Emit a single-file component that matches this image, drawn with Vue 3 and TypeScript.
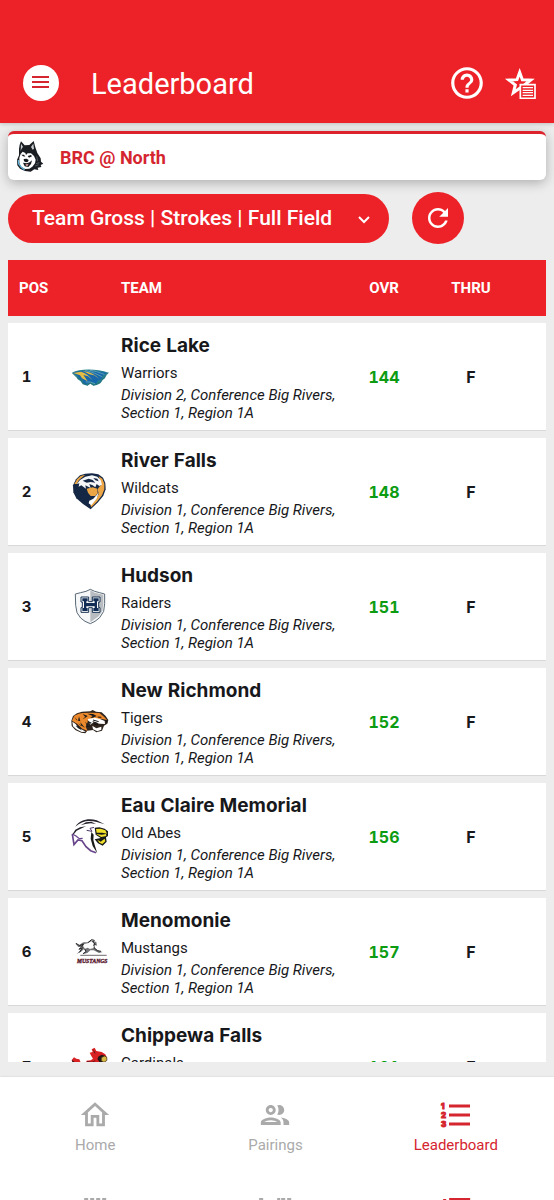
<script setup lang="ts">
import { ref } from 'vue'

interface Shape {
  d: string
  fill?: string
  stroke?: string
  w?: number
}
interface Lettering {
  text: string
  x: number
  y: number
  size: number
  family: string
  color: string
  edge: string
  slant?: string
}
interface Team {
  pos: number
  name: string
  mascot: string
  division: number
  score: number
  thru: string
  box: string
  art: Shape[]
  lettering?: Lettering
}

const filter = ref('Team Gross | Strokes | Full Field')

const huskyArt: Shape[] = [
  { d: 'M32 45 34 32 38 22 49 34 63 33 76 21 81 40 87 57 97 73 98 83 105 89 97 93 99 99 88 101 90 108 78 106 67 113 50 111 35 104 27 94 26 78 32 64Z', fill: '#1a1e22' },
  { d: 'M38 29 44 38 39 46 37 52ZM72 33 75 29 77 44 73 47 68 39Z', fill: '#c9cdd0' },
  { d: 'M37 60 43 53 51 57 53 63 58 58 68 58 77 66 82 77 80 88 72 98 63 104 50 105 38 98 33 86 33 71Z', fill: '#fff' },
  { d: 'M39 62 47 62 51 68 44 67ZM58 66 68 63 71 67 62 71ZM46 75 55 74 61 78 59 83 53 85 47 82ZM44 86 55 88 64 85 71 79 68 90 60 99 49 97Z', fill: '#15191c' },
  { d: 'M51 91 61 89 58 96 53 96Z', fill: '#c08b8b' },
  { d: 'M30 78 31 89 39 100 49 107', stroke: '#64b2d8', w: 4 },
  { d: 'M85 67 88 81M80 96 91 92M83 89 93 86', stroke: '#69737a', w: 2 },
]

const teams: Team[] = [
  {
    pos: 1, name: 'Rice Lake', mascot: 'Warriors', division: 2, score: 144, thru: 'F', box: '210 115 120 120',
    art: [
      { d: 'M216 162C238 149 289 149 326 162L319 168 315 179 307 185 302 193 291 199 280 201 271 195 262 201 248 197 242 188 233 182 229 174Z', fill: '#287f91' },
      { d: 'M220 163C243 153 286 155 320 163L309 170 304 180 293 186 288 196 272 190 257 197 250 193 248 184 237 178 232 170Z', fill: '#1767ac' },
      { d: 'M220 163 243 159C260 164 269 174 278 185L264 173 250 169 263 188 246 179 240 170ZM248 157C270 159 288 170 298 180L282 170 266 166 257 161Z', fill: '#e3bc44' },
      { d: 'M256 156C276 158 292 168 306 174M270 155 290 159 313 167M257 190 271 190 285 195', stroke: '#78b6b9', w: 2 },
      { d: 'M217 163 230 176 241 181 249 194 263 199 271 193 281 199 300 192 307 183 316 173 325 162', stroke: '#236b6d', w: 2 },
    ],
  },
  {
    pos: 2, name: 'River Falls', mascot: 'Wildcats', division: 1, score: 148, thru: 'F', box: '30 36 120 120',
    art: [
      { d: 'M39 76 48 58 60 46 76 41 96 40 115 43 129 53 136 69 137 88 130 107 114 127 92 148 69 132 49 115 40 97Z', fill: '#142744' },
      { d: 'M43 72 51 58 62 48 76 44 67 52 57 60 50 72ZM116 49 127 56 133 71 133 88 126 106 112 124 94 142 91 134 108 118 116 102 113 88 118 80 124 74Z', fill: '#eda645' },
      { d: 'M80 86 98 82 112 86 113 100 106 108 92 108 84 98Z', fill: '#eda645' },
      { d: 'M50 72 60 60 76 50 96 46 112 50 122 60 126 74 118 78 110 72 106 82 98 76 88 72 92 84 76 76 78 86 64 76 56 80 58 70Z', fill: '#f5f7f9' },
      { d: 'M68 62 86 56 98 60 106 68 92 66 80 68ZM100 54 112 56 116 64 106 61Z', fill: '#142744' },
      { d: 'M88 122 100 116 116 98 110 116 94 136 86 130Z', fill: '#fff' },
    ],
  },
  {
    pos: 3, name: 'Hudson', mascot: 'Raiders', division: 1, score: 151, thru: 'F', box: '30 21 120 120',
    art: [
      { d: 'M46 42 62 38 78 34 91 28 104 34 119 38 134 42 134 71 131 94 119 113 105 124 91 131 75 124 62 114 51 98 47 76Z', fill: '#f6f7f8', stroke: '#596976', w: 3 },
      { d: 'M91 31 104 38 130 44 130 72 127 93 116 109 91 127Z', fill: '#b9bdc1' },
      { d: 'M63 51H86V65H97V51H120V66H116V83H120V97H97V83H86V97H63V83H67V66H63Z', fill: '#fff', stroke: '#173253', w: 3 },
      { d: 'M67 55H83V64H79V69H104V64H100V55H116V64H111V84H116V93H100V84H104V79H79V84H83V93H67V84H72V64H67Z', fill: '#112d55' },
    ],
  },
  {
    pos: 4, name: 'New Richmond', mascot: 'Tigers', division: 1, score: 152, thru: 'F', box: '30 365 120 120',
    art: [
      { d: 'M34 421 39 407 51 399 66 394 91 393 98 389 108 394 125 396 137 407 145 419 142 430 132 436 126 451 109 456 99 449 82 451 76 459 64 457 46 449 35 437Z', fill: '#30251e' },
      { d: 'M36 421 43 406 56 400 68 398 93 397 118 398 132 409 141 419 123 415 108 418 96 415 83 424 77 439 83 452 67 445 51 430Z', fill: '#eb892c' },
      { d: 'M37 424 47 431 55 444 67 448 77 454 65 455 49 447 39 438ZM83 416 104 412 120 416 134 422 135 431 118 430 102 425 91 433ZM97 436 109 444 124 439 124 448 112 453 99 447Z', fill: '#fff' },
      { d: 'M43 409 49 419 61 423 57 408 54 422ZM68 415 76 410 68 401 83 407 74 414ZM91 413 98 407 82 400 99 401 110 407 98 412ZM80 420 96 428 90 430ZM75 423 85 436 96 436 82 440ZM53 428 64 438 61 426 75 443ZM47 438 54 438 66 451Z', fill: '#171b1d' },
      { d: 'M99 419 116 424M98 424 113 429M101 431 114 434M137 419 141 427M113 410 124 411', stroke: '#111', w: 3 },
    ],
  },
  {
    pos: 5, name: 'Eau Claire Memorial', mascot: 'Old Abes', division: 1, score: 156, thru: 'F', box: '30 33 120 120',
    art: [
      { d: 'M46 62C60 41 86 36 110 43L134 55 110 48C86 41 64 45 46 62ZM38 84 46 71 60 64 78 61 62 68 50 74 42 84ZM62 58 78 49 94 47 108 54 92 52 76 54Z', fill: '#27242d' },
      { d: 'M37 84 42 116 54 102 66 104 78 122 92 134 108 140', stroke: '#67458b', w: 5 },
      { d: 'M37 84 48 90 58 98 68 97', stroke: '#67458b', w: 4 },
      { d: 'M94 78 92 98 98 120 112 142 105 120 100 102 101 86Z', fill: '#171919' },
      { d: 'M104 65 118 64 134 68 144 76 144 90 138 94 140 107 128 119 114 112 104 100 122 96 107 86Z', fill: '#171919' },
      { d: 'M108 69 122 68 136 73 141 83 127 80 110 80ZM108 84 125 86 138 84 139 90 124 93ZM112 101 122 107 134 98 136 106 127 114 118 110Z', fill: '#f0e02b' },
      { d: 'M80 73 96 76 90 67 102 64', stroke: '#4e3a68', w: 3 },
    ],
  },
  {
    pos: 6, name: 'Menomonie', mascot: 'Mustangs', division: 1, score: 157, thru: 'F', box: '30 378 120 120',
    art: [
      { d: 'M45 412 57 417 70 409 82 409 92 402 100 405 109 408 111 419 104 417 105 427 117 435 128 438 117 441 101 433 91 433 82 441 67 445 77 437 73 428 63 437 50 444 61 433 66 423 55 423Z', fill: '#737477' },
      { d: 'M73 414 83 412 94 406 103 411 101 426 90 429 83 425 75 428 69 420Z', fill: '#fbfbfb' },
      { d: 'M48 412 59 419 70 414 65 422 57 430 67 425 59 439M85 410 94 401 103 403 98 408 106 415 99 418M74 429 78 437 69 443M101 424 112 434 123 436', stroke: '#242326', w: 3 },
      { d: 'M62 446 140 446 140 450 60 450Z', fill: '#8d868b' },
    ],
    lettering: { text: 'MUSTANGS', x: 51, y: 470, size: 17, family: 'Liberation Serif', color: '#57172d', edge: '#57172d', slant: 'italic' },
  },
  {
    pos: 7, name: 'Chippewa Falls', mascot: 'Cardinals', division: 1, score: 161, thru: 'F', box: '210 138 120 120',
    art: [
      { d: 'M215 177 222 169 229 173 238 175 242 184 256 188 260 179 272 178 279 173 274 165 269 155 278 153 275 145 284 140 289 150 305 153 316 160 320 169 317 181 308 191 298 215 276 234 251 224 238 202 220 192Z', fill: '#d92124' },
      { d: 'M215 177 224 183 240 184 236 194 222 192ZM296 166 306 161 318 166 312 172 309 184 299 184 292 174ZM279 143 286 157 294 160 283 156Z', fill: '#251515' },
      { d: 'M304 170 313 165 320 168 321 178 312 184 304 179Z', fill: '#d7b843', stroke: '#3b321e', w: 2 },
      { d: 'M261 181 276 184 286 179M251 203 275 207 292 197', stroke: '#751315', w: 3 },
    ],
  },
]
</script>

<template>
  <div class="app">
    <header class="bar">
      <button class="menu" aria-label="Menu">
        <svg width="36" height="36" viewBox="0 0 36 36"><path d="M9 12H26M9 17H26M9 22H26" fill="none" stroke="currentColor" stroke-width="2" /></svg>
      </button>
      <h1>Leaderboard</h1>
      <button class="action" aria-label="Help">
        <svg width="38" height="38" viewBox="0 0 24 24"><path fill="currentColor" d="M11 18h2v-2h-2v2zm1-16C6.48 2 2 6.48 2 12s4.48 10 10 10 10-4.48 10-10S17.52 2 12 2zm0 18c-4.41 0-8-3.59-8-8s3.59-8 8-8 8 3.59 8 8-3.59 8-8 8zm0-14c-2.210 0-4 1.790-4 4h2c0-1.100.900-2 2-2s2 .900 2 2c0 2-3 1.750-3 5h2c0-2.250 3-2.500 3-5 0-2.210-1.790-4-4-4z" /></svg>
      </button>
      <button class="action" aria-label="Favorites">
        <svg width="32" height="32" viewBox="0 0 96 96">
          <path d="M47 16 55 38 80 39 61 54 67 77 47 64 28 77 34 54 15 39 39 38Z" fill="none" stroke="currentColor" stroke-width="9" />
          <path d="M49 53H93V94H49Z" fill="#ed2228" stroke="currentColor" stroke-width="5" />
          <path d="M56 62H87M56 70H87M56 77H87M56 85H87" stroke="currentColor" stroke-width="4" />
        </svg>
      </button>
    </header>

    <main class="content">
      <section class="event">
        <svg class="husky" width="30" height="34" viewBox="23 18 90 102" aria-hidden="true">
          <path v-for="(s, i) in huskyArt" :key="i" :d="s.d" :fill="s.fill ?? 'none'" :stroke="s.stroke ?? 'none'" :stroke-width="s.w" />
        </svg>
        <h2>BRC @ North</h2>
      </section>

      <div class="filters">
        <div class="picker">
          <select v-model="filter" aria-label="Leaderboard view">
            <option>Team Gross | Strokes | Full Field</option>
          </select>
          <svg class="chevron" width="12" height="12" viewBox="0 0 12 12" aria-hidden="true"><path d="M1 4 6 9 11 4" fill="none" stroke="currentColor" stroke-width="2" /></svg>
        </div>
        <button class="refresh" aria-label="Refresh">
          <svg width="30" height="30" viewBox="0 0 24 24"><path fill="currentColor" d="M17.650 6.350C16.200 4.900 14.210 4 12 4c-4.420 0-7.990 3.580-7.990 8s3.570 8 7.990 8c3.730 0 6.840-2.550 7.730-6h-2.080c-.820 2.330-3.040 4-5.650 4-3.310 0-6-2.690-6-6s2.690-6 6-6c1.660 0 3.140.690 4.220 1.780L13 11h7V4l-2.350 2.350z" /></svg>
        </button>
      </div>

      <div class="board">
        <table>
          <colgroup>
            <col class="c-pos" /><col class="c-logo" /><col /><col class="c-ovr" /><col class="c-thru" />
          </colgroup>
          <thead>
            <tr>
              <th scope="col" class="pos">POS</th>
              <td></td>
              <th scope="col" class="team">TEAM</th>
              <th scope="col">OVR</th>
              <th scope="col" class="thru">THRU</th>
            </tr>
          </thead>
          <tbody>
            <tr v-for="t in teams" :key="t.pos">
              <td class="pos">{{ t.pos }}</td>
              <td class="logo">
                <svg width="40" height="40" :viewBox="t.box" aria-hidden="true">
                  <path v-for="(s, i) in t.art" :key="i" :d="s.d" :fill="s.fill ?? 'none'" :stroke="s.stroke ?? 'none'" :stroke-width="s.w" />
                  <text
                    v-if="t.lettering"
                    :x="t.lettering.x"
                    :y="t.lettering.y"
                    :font-size="t.lettering.size"
                    :font-family="t.lettering.family"
                    :font-style="t.lettering.slant"
                    :fill="t.lettering.color"
                    :stroke="t.lettering.edge"
                    font-weight="700"
                  >{{ t.lettering.text }}</text>
                </svg>
              </td>
              <td class="team">
                <h3>{{ t.name }}</h3>
                <p class="mascot">{{ t.mascot }}</p>
                <p class="detail">Division {{ t.division }}, Conference Big Rivers, Section 1, Region 1A</p>
              </td>
              <td class="score">{{ t.score }}</td>
              <td class="thru">{{ t.thru }}</td>
            </tr>
          </tbody>
        </table>
      </div>
    </main>

    <nav class="tabs">
      <a href="#home">
        <svg width="34" height="34" viewBox="0 0 24 24"><path fill="currentColor" d="M12 5.690l5 4.500V18h-2v-6H9v6H7v-7.810l5-4.500M12 3L2 12h3v8h6v-6h2v6h6v-8h3L12 3z" /></svg>
        <span>Home</span>
      </a>
      <a href="#pairings">
        <svg width="34" height="34" viewBox="0 0 24 24"><path fill="currentColor" d="M9 13.750c-2.340 0-7 1.170-7 3.500V19h14v-1.750c0-2.330-4.660-3.500-7-3.500zM4.340 17c.840-.580 2.870-1.250 4.660-1.250s3.820.670 4.660 1.250H4.340zM9 12c1.930 0 3.500-1.570 3.500-3.500S10.930 5 9 5 5.500 6.570 5.500 8.500 7.070 12 9 12zm0-5c.830 0 1.500.670 1.500 1.500S9.830 10 9 10s-1.500-.670-1.500-1.500S8.170 7 9 7zm7.040 6.810c1.160.840 1.960 1.960 1.960 3.440V19h4v-1.750c0-2.020-3.500-3.170-5.960-3.440zM15 12c1.930 0 3.500-1.570 3.500-3.500S16.930 5 15 5c-.540 0-1.040.130-1.500.350.630.890 1 1.980 1 3.150s-.370 2.260-1 3.150c.460.220.960.350 1.500.350z" /></svg>
        <span>Pairings</span>
      </a>
      <a href="#leaderboard" class="active" aria-current="page">
        <svg width="34" height="34" viewBox="0 0 34 34">
          <path d="M10 8H31M10 17H31M10 26H31" stroke="currentColor" stroke-width="3" />
          <g class="numerals"><text x="2" y="11">1</text><text x="2" y="20">2</text><text x="2" y="29">3</text></g>
        </svg>
        <span>Leaderboard</span>
      </a>
    </nav>
    <div class="peek" aria-hidden="true">
      <svg width="24" height="2" viewBox="0 0 24 2"><path fill="currentColor" d="M1 0H5V2H1ZM7 0H11V2H7ZM13 0H17V2H13ZM19 0H23V2H19Z" /></svg>
      <svg width="32" height="2" viewBox="0 0 32 2"><path fill="currentColor" d="M0 0H4V2H0ZM18 0H21V2H18ZM22 0H26V2H22ZM28 0H32V2H28Z" /></svg>
      <svg class="active" width="30" height="2" viewBox="0 0 30 2"><path fill="currentColor" d="M2 1H5V2H2ZM8 0H29V2H8Z" /></svg>
    </div>
  </div>
</template>

<style>
body {
  background: #eee;
}
</style>

<style scoped>
.app {
  display: flex;
  flex-direction: column;
  height: 100vh;
  overflow: hidden;
  background: #ededed;
  color: #17181b;
  font-family: Roboto, "Liberation Sans", sans-serif;
}
h1, h2, h3, p {
  margin: 0;
}
button {
  display: flex;
  align-items: center;
  justify-content: center;
  padding: 0;
  border: 0;
}
svg {
  display: block;
  flex: none;
}
.bar {
  display: flex;
  align-items: center;
  flex: none;
  gap: 18px;
  height: 80px;
  padding: 43px 18px 0 23px;
  background: #ed2228;
  color: #fff;
  box-shadow: 0 1px 4px #0003;
}
.menu {
  width: 36px;
  height: 36px;
  border-radius: 50%;
  background: #fff;
  color: #d5252f;
}
.bar h1 {
  flex: 1;
  margin-left: 14px;
  padding-top: 2px;
  font-size: 29px;
  line-height: 36px;
  font-weight: 400;
}
.action {
  background: none;
  color: #fff;
}
.content {
  display: flex;
  flex-direction: column;
  flex: 1;
  min-height: 0;
  padding: 8px 8px 15px;
}
.event {
  display: flex;
  align-items: center;
  flex: none;
  gap: 14px;
  height: 46px;
  padding-left: 8px;
  border-top: 3px solid #dc232b;
  border-radius: 6px;
  background: #fff;
  box-shadow: 0 3px 12px #0004;
}
.event h2 {
  padding-top: 2px;
  font-size: 18px;
  line-height: 24px;
  font-weight: 700;
  color: #d5252f;
}
.filters {
  display: flex;
  align-items: center;
  gap: 23px;
  margin-top: 12px;
}
.picker {
  position: relative;
  flex: 0 1 381px;
}
.picker select {
  width: 100%;
  height: 49px;
  padding: 0 44px 0 24px;
  border: 0;
  border-radius: 25px;
  appearance: none;
  background: #ed2228;
  color: #fff;
  font-family: inherit;
  font-size: 21px;
  font-weight: 500;
}
.chevron {
  position: absolute;
  top: 19px;
  right: 19px;
  color: #fff;
  pointer-events: none;
}
.refresh {
  width: 52px;
  height: 52px;
  border-radius: 50%;
  background: #ed2228;
  color: #fff;
}
.board {
  flex: 1;
  min-height: 0;
  margin-top: 9px;
  overflow: hidden;
}
table {
  width: 100%;
  table-layout: fixed;
  border-collapse: separate;
  border-spacing: 0 7px;
}
.c-pos {
  width: 56px;
}
.c-logo {
  width: 57px;
}
.c-ovr {
  width: 76px;
}
.c-thru {
  width: 124px;
}
th, td {
  padding: 0;
  text-align: center;
}
thead th, thead td {
  height: 56px;
  background: #ed2228;
  color: #fff;
  font-size: 15px;
  font-weight: 700;
}
tbody td {
  border-bottom: 1px solid #d8d8d8;
  background: #fff;
  font-family: Inter, Roboto, sans-serif;
  font-size: 16px;
  font-weight: 700;
  font-variant-numeric: tabular-nums;
}
th.pos {
  padding-left: 11px;
  text-align: left;
}
td.pos {
  padding-right: 19px;
  font-size: 15px;
}
td.logo {
  padding-left: 6px;
}
.team {
  text-align: left;
}
td.team {
  padding: 11px 0 8px;
}
.thru {
  padding-right: 26px;
}
.score {
  color: #0c9c12;
}
h3 {
  font-size: 19px;
  line-height: 24px;
  font-weight: 700;
}
.mascot {
  margin: 4px 0 2px;
  font-family: Roboto, sans-serif;
  font-size: 15px;
  line-height: 22px;
  font-weight: 400;
}
.detail {
  font-family: Roboto, sans-serif;
  font-size: 15px;
  line-height: 18px;
  font-style: italic;
  font-weight: 400;
}
.tabs {
  display: flex;
  flex: none;
  height: 121px;
  padding: 0 8px 0 5px;
  background: #fff;
  box-shadow: 0 0 2px #0002;
  box-sizing: border-box;
}
.tabs a {
  display: flex;
  flex: 1;
  flex-direction: column;
  align-items: center;
  gap: 2px;
  padding-top: 21px;
  color: #aaa;
  font-size: 15px;
  line-height: 22px;
  text-decoration: none;
}
.numerals {
  fill: currentColor;
  stroke: currentColor;
  font-family: Inter, sans-serif;
  font-size: 8px;
  font-weight: 800;
}
.peek {
  display: flex;
  flex: none;
  padding: 0 8px 0 5px;
  background: #fff;
  color: #aaa;
}
.peek svg {
  flex: 1;
}
.tabs .active, .peek .active {
  color: #d5252f;
}
</style>
